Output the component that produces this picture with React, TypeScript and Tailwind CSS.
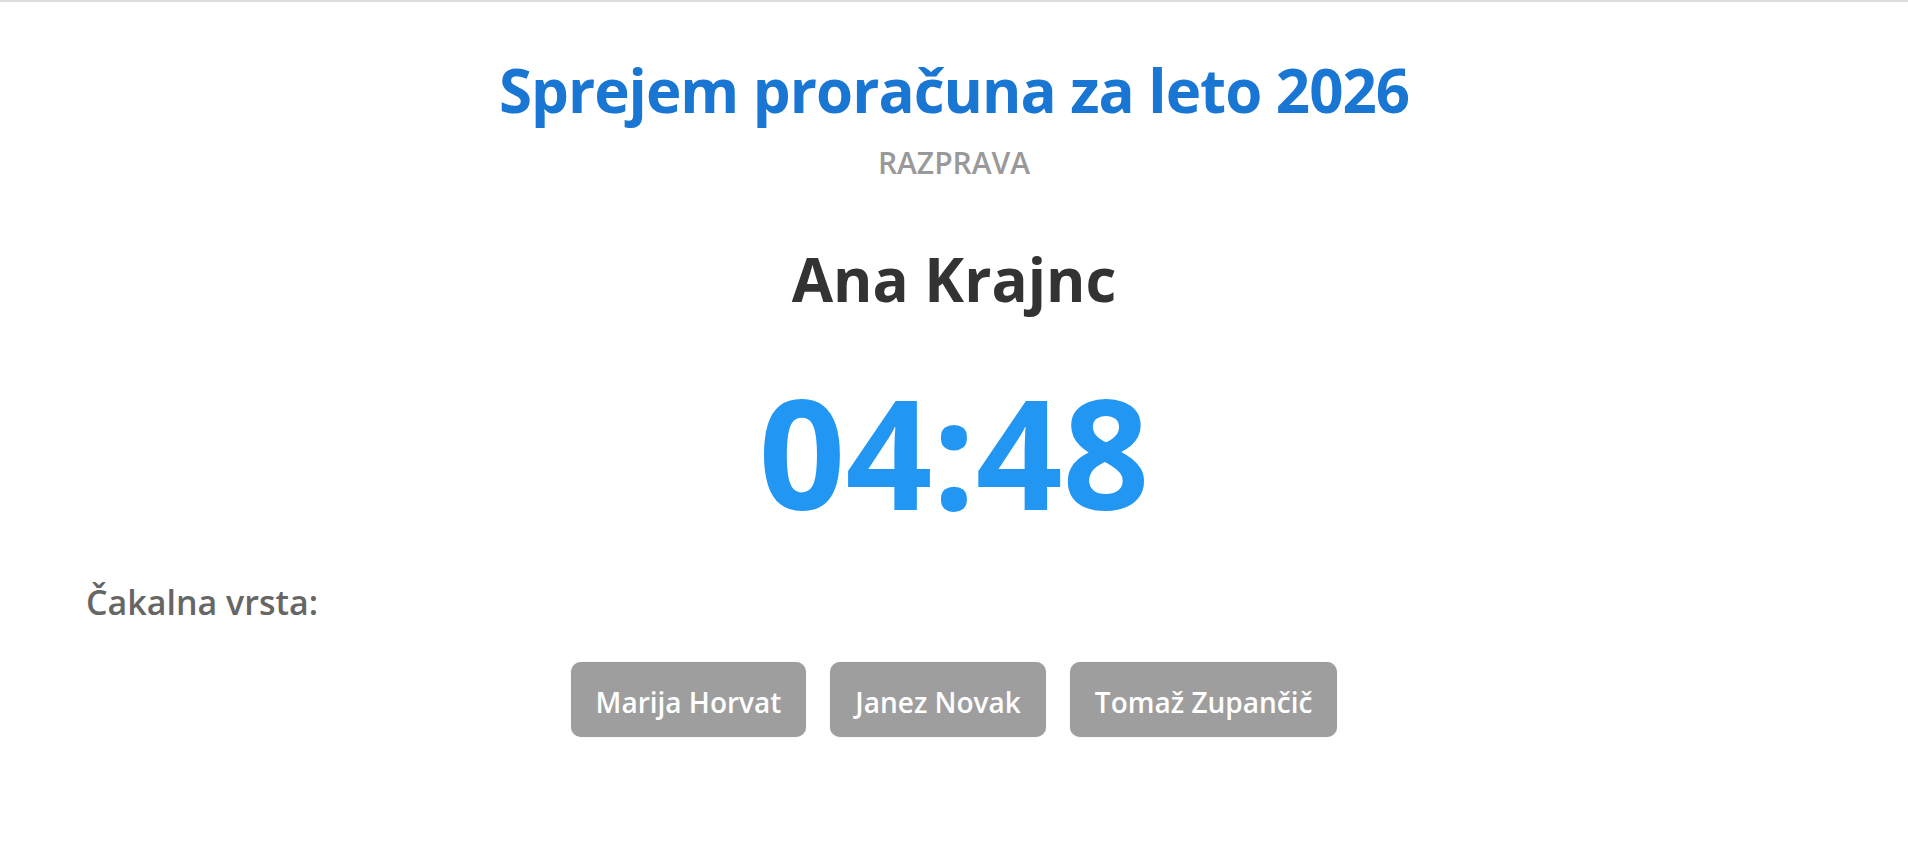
const queue = ["Marija Horvat", "Janez Novak", "Tomaž Zupančič"];

export default function App() {
  return (
    <div className="min-h-screen border-t-2 border-[#dddddd] bg-white font-['Open_Sans','Noto_Sans',sans-serif]">
      <div className="flex flex-col items-center text-center">
        <h1 className="mt-[58px] text-[60px] font-bold leading-none tracking-[-1px] text-[#1976d2]">
          Sprejem proračuna za leto 2026
        </h1>
        <p className="mt-[28px] text-[30px] font-semibold leading-none text-[#999999]">RAZPRAVA</p>
        <h2 className="mt-[71px] text-[60px] font-bold leading-none text-[#333333]">Ana Krajnc</h2>
        <div className="mt-[67px] text-[152px] font-bold leading-none text-[#2196f3]">04:48</div>
      </div>

      <h3 className="mt-[57px] pl-[86px] text-[34px] font-semibold leading-none text-[#666666]">
        Čakalna vrsta:
      </h3>

      <div className="mt-[43px] flex justify-center gap-6">
        {queue.map((name) => (
          <div
            key={name}
            className="rounded-[10px] bg-[#9e9e9e] px-[25px] pb-[21px] pt-[26px] text-[28px] font-semibold leading-none text-white shadow-[0_0_1px_rgba(0,0,0,0.25)]"
          >
            {name}
          </div>
        ))}
      </div>
    </div>
  );
}
